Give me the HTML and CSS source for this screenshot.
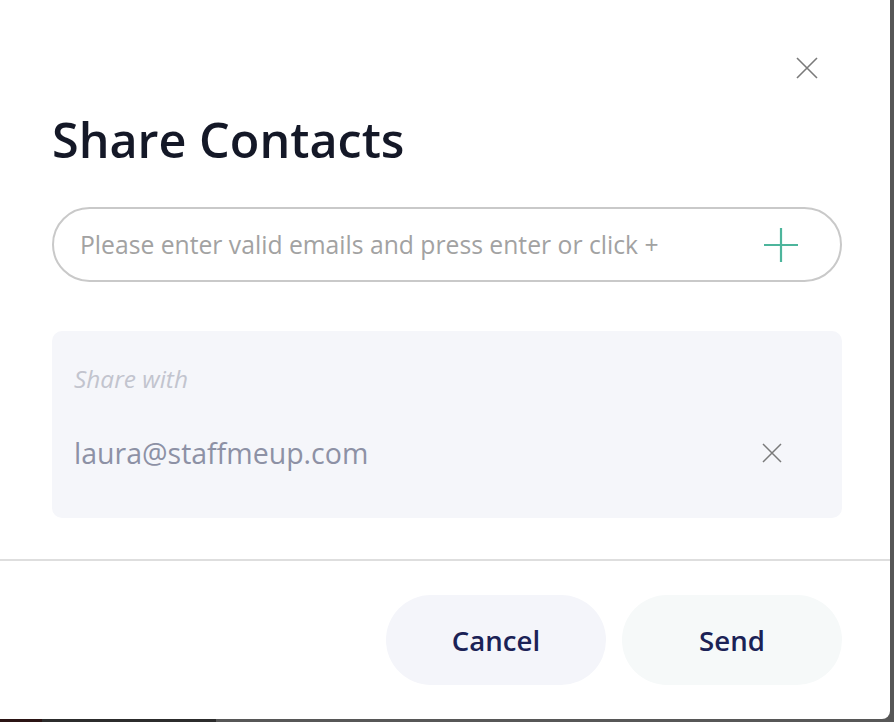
FILE: index.html
```html
<!DOCTYPE html>
<html lang="en">
<head>
<meta charset="utf-8">
<title>Share Contacts</title>
<link rel="stylesheet" href="styles.css">
</head>
<body>
<div class="backdrop">
  <div class="modal">
    <div class="body">
      <div class="close-row">
        <button class="close" aria-label="Close">
          <svg width="22" height="22" viewBox="0 0 22 22"><path d="M1 1L21 21M21 1L1 21" stroke="#7a7a7a" stroke-width="1.6" fill="none"/></svg>
        </button>
      </div>
      <h1 class="title">Share Contacts</h1>
      <div class="email-input">
        <span class="placeholder">Please enter valid emails and press enter or click +</span>
        <svg class="plus" width="34" height="34" viewBox="0 0 34 34"><path d="M17 0V34M0 17H34" stroke="#4db59c" stroke-width="2.2" fill="none"/></svg>
      </div>
      <div class="share-box">
        <div class="share-label">Share with</div>
        <div class="share-row">
          <span class="email">laura@staffmeup.com</span>
          <svg class="remove" width="20" height="20" viewBox="0 0 20 20"><path d="M1 1L19 19M19 1L1 19" stroke="#7a7a7a" stroke-width="1.5" fill="none"/></svg>
        </div>
      </div>
    </div>
    <div class="footer">
      <button class="btn btn-cancel">Cancel</button>
      <button class="btn btn-send">Send</button>
    </div>
  </div>
</div>
</body>
</html>
```
FILE: styles.css
```css
html, body {
  margin: 0;
  padding: 0;
}
body {
  width: 894px;
  height: 722px;
  overflow: hidden;
  background: #6a6a6a;
  font-family: "Open Sans", "Noto Sans", sans-serif;
}
.backdrop {
  width: 894px;
  height: 722px;
  background: linear-gradient(to right, #2b1414 0, #2b1414 42px, #2c2c2c 42px, #2c2c2c 216px, #575757 216px, #575757 894px);
}
.modal {
  width: 890px;
  height: 719px;
  background: #fff;
  border-bottom-right-radius: 8px;
  display: flex;
  flex-direction: column;
}
.body {
  padding: 0 48px 0 52px;
  display: flex;
  flex-direction: column;
}
.close-row {
  display: flex;
  justify-content: flex-end;
  margin-top: 57px;
  padding-right: 24px;
}
.close {
  border: 0;
  background: none;
  padding: 0;
  width: 22px;
  height: 22px;
  display: block;
}
.close svg { display: block; }
.title {
  margin: 31px 0 0 0;
  font-size: 48.5px;
  line-height: 58px;
  font-weight: 600;
  color: #141827;
  letter-spacing: 0;
}
.email-input {
  margin-top: 39px;
  height: 75px;
  box-sizing: border-box;
  border: 2px solid #c9c9c9;
  border-radius: 38px;
  display: flex;
  align-items: center;
  justify-content: space-between;
  padding: 0 42px 0 26px;
}
.placeholder {
  font-size: 24.7px;
  color: #a2a2a2;
}
.plus { display: block; }
.share-box {
  margin-top: 49px;
  height: 187px;
  box-sizing: border-box;
  background: #f5f6fa;
  border-radius: 10px;
  padding: 33px 60px 0 22px;
}
.share-label {
  font-size: 24.4px;
  font-style: italic;
  color: #c2c4ce;
  line-height: 30px;
}
.share-row {
  margin-top: 39px;
  display: flex;
  align-items: center;
  justify-content: space-between;
}
.email {
  font-size: 28.5px;
  color: #8d91a5;
  line-height: 40px;
}
.remove { display: block; }
.footer {
  margin-top: 41px;
  border-top: 2px solid #dedede;
  padding: 34px 48px 0 0;
  display: flex;
  justify-content: flex-end;
  gap: 16px;
}
.btn {
  width: 220px;
  height: 90px;
  border: 0;
  border-radius: 45px;
  font-family: "Open Sans", "Noto Sans", sans-serif;
  font-size: 27.6px;
  font-weight: 600;
  color: #1b2256;
  padding: 0;
}
.btn-cancel { background: #f4f5fa; }
.btn-send { background: #f6f9f9; }
```
